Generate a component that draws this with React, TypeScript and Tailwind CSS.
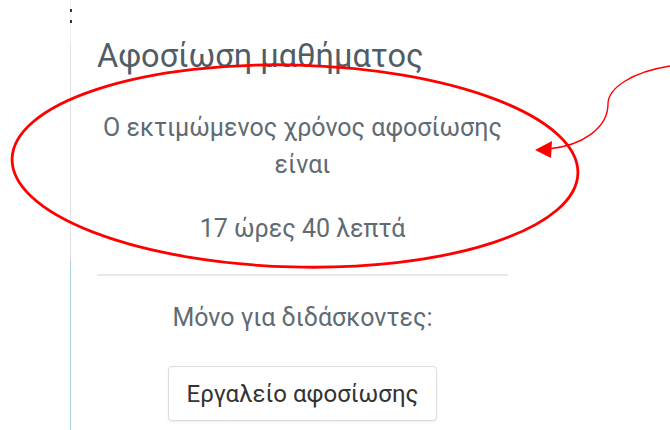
import React from "react";

const font = { fontFamily: "Roboto, 'Noto Sans', sans-serif" };

function Annotation() {
  return (
    <svg
      className="pointer-events-none absolute inset-0"
      width={670}
      height={430}
      viewBox="0 0 670 430"
    >
      <ellipse
        cx={295}
        cy={166}
        rx={283}
        ry={101}
        fill="none"
        stroke="#ff0000"
        strokeWidth={2.8}
        transform="rotate(1.5 295 166)"
      />
      <path
        d="M 670 66 C 632 72, 608 88, 608 104 C 608 128, 582 146, 548 149"
        fill="none"
        stroke="#ff0000"
        strokeWidth={1.4}
      />
      <polygon points="535,150 552,141 551,158" fill="#ff0000" />
    </svg>
  );
}

export default function App() {
  return (
    <div className="relative h-[430px] w-[670px] overflow-hidden bg-white" style={font}>
      <div className="flex h-full">
        <div className="w-[70px] shrink-0" />
        <div className="relative flex w-px shrink-0 flex-col">
          <div className="h-[42px] bg-[#f0f0f0]" />
          <div className="h-[218px] bg-[#e2e2e2]" />
          <div className="flex-1 bg-[#a9d3d9]" />
          <div className="absolute left-0 top-[9px] h-[3px] w-[2px] bg-[#333]" />
          <div className="absolute left-0 top-[20px] h-[3px] w-[2px] bg-[#333]" />
        </div>
        <div className="w-[437px] shrink-0 pl-[26px]">
          <h2 className="mt-[37px] text-[32.5px] leading-[38px] font-normal text-[#505d66]">
            Αφοσίωση μαθήματος
          </h2>
          <div className="mt-[34px] text-center text-[25px] leading-[37px] text-[#5f6b73]">
            <p>
              Ο εκτιμώμενος χρόνος αφοσίωσης
              <br />
              είναι
            </p>
            <p className="mt-[27px]">17 ώρες 40 λεπτά</p>
          </div>
          <div className="mt-[27px] h-[2px] bg-[#e6eaec]" />
          <p className="mt-[27px] text-center text-[25px] leading-[30px] text-[#5f6b73]">
            Μόνο για διδάσκοντες:
          </p>
          <div className="mt-[33px] flex justify-center">
            <button className="flex h-[55px] w-[269px] items-center justify-center rounded-[4px] border border-[#dcdcdc] bg-white text-[24px] text-[#333] shadow-[0_1px_2px_rgba(0,0,0,0.08)]">
              Εργαλείο αφοσίωσης
            </button>
          </div>
        </div>
      </div>
      <Annotation />
    </div>
  );
}
